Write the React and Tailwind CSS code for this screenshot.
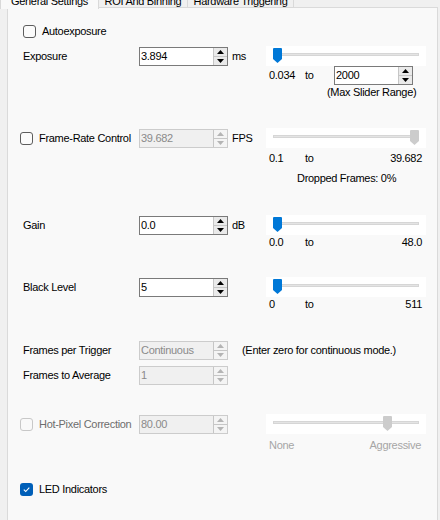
import React from 'react';

const font = { fontFamily: '"Liberation Sans", Arial, sans-serif' };

const Check = ({ checked, disabled }) => {
  if (checked) {
    return (
      <div className="w-[13px] h-[13px] rounded-[3px] bg-[#005fb8] flex items-center justify-center shrink-0">
        <svg width="9" height="9" viewBox="0 0 9 9">
          <path d="M1.8 4.7 L3.7 6.5 L7.3 2.6" fill="none" stroke="#ffffff" strokeWidth="1.1" />
        </svg>
      </div>
    );
  }
  return (
    <div
      className={`w-[13px] h-[13px] rounded-[3px] border shrink-0 ${
        disabled ? 'border-[#c8c8c8] bg-[#f9f9f9]' : 'border-[#5d5d5d] bg-[#fbfbfb]'
      }`}
    />
  );
};

const Spin = ({ disabled }) => {
  const fill = disabled ? '#b4b4b4' : '#000000';
  return (
    <div className="flex flex-col w-[14px] h-full border-l border-[#c6c6c6]">
      <div className={`flex-1 flex items-center justify-center border-b border-[#c6c6c6] ${disabled ? 'bg-[#f4f4f4]' : 'bg-[#eaeaea]'}`}>
        <svg width="7" height="4" viewBox="0 0 7 4">
          <path d="M0 4 L3.5 0 L7 4 Z" fill={fill} />
        </svg>
      </div>
      <div className={`flex-1 flex items-center justify-center ${disabled ? 'bg-[#f4f4f4]' : 'bg-[#eaeaea]'}`}>
        <svg width="7" height="4" viewBox="0 0 7 4">
          <path d="M0 0 L7 0 L3.5 4 Z" fill={fill} />
        </svg>
      </div>
    </div>
  );
};

const NumBox = ({ value, disabled, width = 'w-[89px]' }) => (
  <div
    className={`${width} h-[19px] flex border ${
      disabled ? 'border-[#cccccc] bg-[#f0f0f0] text-[#8a8a8a]' : 'border-[#7a7a7a] bg-white text-black'
    }`}
  >
    <div className="flex-1 flex items-center pl-[1px] leading-none">{value}</div>
    <Spin disabled={disabled} />
  </div>
);

const Slider = ({ pos, color }) => (
  <div className="relative w-[160px] h-[20px] bg-white">
    <div className="absolute left-[7px] right-[7px] top-[7px] h-[3px] bg-[#e4e4e4] border border-[#d6d6d6]" />
    <svg className="absolute top-[2px]" style={{ left: pos }} width="9" height="15" viewBox="0 0 9 15">
      <path d="M1 0 H8 Q9 0 9 1 V11 L4.5 15 L0 11 V1 Q0 0 1 0 Z" fill={color} />
    </svg>
  </div>
);

const Tabs = () => (
  <div className="flex h-[22px] mt-[-14px] relative z-10 text-black">
    <div className="w-[99px] h-[23px] bg-[#f9f9f9] border-x border-[#d9d9d9] flex justify-center pt-[7px]">General Settings</div>
    <div className="w-[89px] h-[22px] bg-[#f0f0f0] border-r border-b border-[#d9d9d9] flex justify-center pt-[7px]">ROI And Binning</div>
    <div className="w-[106px] h-[22px] bg-[#f0f0f0] border-r border-b border-[#d9d9d9] flex justify-center pt-[7px]">Hardware Triggering</div>
  </div>
);

const App = () => {
  return (
    <div
      className="w-[440px] h-[520px] bg-[#f0f0f0] flex flex-col overflow-hidden text-[11px] tracking-[-0.3px] text-black"
      style={font}
    >
      <Tabs />
      <div className="ml-[7px] w-[431px] flex-1 bg-[#f9f9f9] border-x border-t border-[#dadada] mt-[-1px] pl-[12px] flex flex-col">
        {/* Autoexposure */}
        <div className="mt-[17px] h-[13px] flex items-center pl-[3px] gap-[6px] leading-none">
          <Check />
          <span>Autoexposure</span>
        </div>

        {/* Exposure */}
        <div className="mt-[8px] flex">
          <div className="w-[246px] h-[20px] flex items-center leading-none">
            <span className="w-[119px] pl-[3px]">Exposure</span>
            <NumBox value="3.894" />
            <span className="ml-[4px]">ms</span>
          </div>
          <div className="flex flex-col">
            <Slider pos={7} color="#0078d7" />
            <div className="flex items-center h-[19px] leading-none">
              <span className="w-[39px] pl-[3px]">0.034</span>
              <span className="w-[29px]">to</span>
              <NumBox value="2000" width="w-[79px]" />
            </div>
            <div className="h-[14px] flex items-center pl-[61px] leading-none">(Max Slider Range)</div>
          </div>
        </div>

        {/* Frame-Rate Control */}
        <div className="mt-[29px] flex">
          <div className="w-[246px] h-[20px] flex items-center leading-none">
            <div className="w-[119px] flex items-center gap-[6px]">
              <Check />
              <span>Frame-Rate Control</span>
            </div>
            <NumBox value="39.682" disabled />
            <span className="ml-[4px]">FPS</span>
          </div>
          <div className="flex flex-col">
            <Slider pos={144} color="#cccccc" />
            <div className="flex items-center h-[20px] leading-none">
              <span className="w-[39px] pl-[3px]">0.1</span>
              <span className="flex-1">to</span>
              <span className="pr-[4px]">39.682</span>
            </div>
            <div className="h-[20px] flex items-center pl-[31px] leading-none">Dropped Frames: 0%</div>
          </div>
        </div>

        {/* Gain */}
        <div className="mt-[27px] flex">
          <div className="w-[246px] h-[20px] flex items-center leading-none">
            <span className="w-[119px] pl-[3px]">Gain</span>
            <NumBox value="0.0" />
            <span className="ml-[4px]">dB</span>
          </div>
          <div className="flex flex-col">
            <Slider pos={7} color="#0078d7" />
            <div className="flex items-center h-[14px] leading-none">
              <span className="w-[39px] pl-[3px]">0.0</span>
              <span className="flex-1">to</span>
              <span className="pr-[4px]">48.0</span>
            </div>
          </div>
        </div>

        {/* Black Level */}
        <div className="mt-[28px] flex">
          <div className="w-[246px] h-[20px] flex items-center leading-none">
            <span className="w-[119px] pl-[3px]">Black Level</span>
            <NumBox value="5" />
          </div>
          <div className="flex flex-col">
            <Slider pos={7} color="#0078d7" />
            <div className="flex items-center h-[14px] leading-none">
              <span className="w-[39px] pl-[3px]">0</span>
              <span className="flex-1">to</span>
              <span className="pr-[4px]">511</span>
            </div>
          </div>
        </div>

        {/* Frames per Trigger */}
        <div className="mt-[30px] h-[19px] flex items-center leading-none">
          <span className="w-[119px] pl-[3px]">Frames per Trigger</span>
          <NumBox value="Continuous" disabled />
          <span className="ml-[14px]">(Enter zero for continuous mode.)</span>
        </div>
        <div className="mt-[6px] h-[19px] flex items-center leading-none">
          <span className="w-[119px] pl-[3px]">Frames to Average</span>
          <NumBox value="1" disabled />
        </div>

        {/* Hot-Pixel Correction */}
        <div className="mt-[29px] flex">
          <div className="w-[246px] h-[20px] flex items-center leading-none">
            <div className="w-[119px] flex items-center gap-[6px] text-[#6d6d6d]">
              <Check disabled />
              <span>Hot-Pixel Correction</span>
            </div>
            <NumBox value="80.00" disabled />
          </div>
          <div className="flex flex-col">
            <Slider pos={117} color="#cccccc" />
            <div className="flex items-center h-[22px] leading-none text-[#a6a6a6]">
              <span className="flex-1 pl-[3px]">None</span>
              <span className="pr-[5px]">Aggressive</span>
            </div>
          </div>
        </div>

        {/* LED Indicators */}
        <div className="mt-[27px] h-[13px] flex items-center gap-[6px] leading-none">
          <Check checked />
          <span>LED Indicators</span>
        </div>
      </div>
    </div>
  );
};

export default App;
